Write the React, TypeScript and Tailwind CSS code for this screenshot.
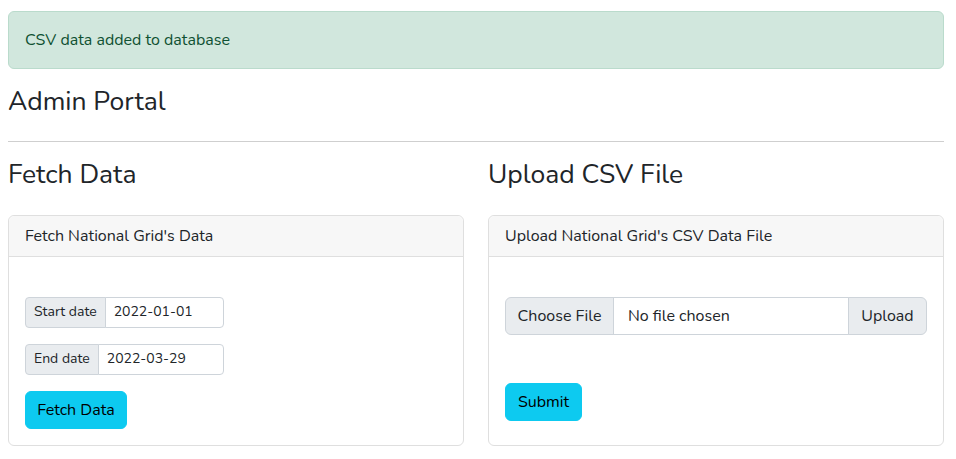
export default function App() {
  return (
    <div className="min-h-screen bg-white pl-2 pr-3 pt-[11px] text-[#212529] font-['Nunito','Lato',sans-serif]">
      <div className="rounded-md border border-[#badbcc] bg-[#d1e7dd] px-4 py-4 text-base leading-6 text-[#0f5132]">
        CSV data added to database
      </div>

      <h3 className="mt-[17px] text-[26.5px] leading-[1.2] font-normal">Admin Portal</h3>
      <hr className="mt-[23px] mb-4 border-t border-[#cfcfcf]" />

      <div className="grid grid-cols-2 gap-6">
        <div className="flex flex-col">
          <h3 className="pt-px text-[26.5px] leading-[1.2] font-normal">Fetch Data</h3>
          <div className="mt-6 flex flex-1 flex-col rounded-md border border-[#dfdfdf]">
            <div className="rounded-t-md border-b border-[#dfdfdf] bg-[#f7f7f7] px-4 py-2 text-base leading-6">
              Fetch National Grid's Data
            </div>
            <div className="flex flex-col px-4 pt-[40px] pb-4">
              <div className="mb-4 flex h-[31px] w-[199px] text-sm">
                <span className="flex items-center rounded-l border border-[#ced4da] bg-[#e9ecef] px-2">Start date</span>
                <input
                  readOnly
                  value="2022-01-01"
                  className="-ml-px min-w-0 flex-1 rounded-r border border-[#ced4da] bg-white px-2 text-sm outline-none"
                />
              </div>
              <div className="mb-4 flex h-[31px] w-[199px] text-sm">
                <span className="flex items-center rounded-l border border-[#ced4da] bg-[#e9ecef] px-2">End date</span>
                <input
                  readOnly
                  value="2022-03-29"
                  className="-ml-px min-w-0 flex-1 rounded-r border border-[#ced4da] bg-white px-2 text-sm outline-none"
                />
              </div>
              <button className="h-[38px] w-[102px] rounded-md border border-[#0dcaf0] bg-[#0dcaf0] text-base text-black">
                Fetch Data
              </button>
            </div>
          </div>
        </div>

        <div className="flex flex-col">
          <h3 className="pt-px text-[26.5px] leading-[1.2] font-normal">Upload CSV File</h3>
          <div className="mt-6 flex flex-1 flex-col rounded-md border border-[#dfdfdf]">
            <div className="rounded-t-md border-b border-[#dfdfdf] bg-[#f7f7f7] px-4 py-2 text-base leading-6">
              Upload National Grid's CSV Data File
            </div>
            <div className="flex flex-col px-4 pt-[40px] pb-4">
              <div className="flex h-[38px] text-base">
                <span className="flex w-[109px] items-center justify-center rounded-l-md border border-[#ced4da] bg-[#e9ecef]">
                  Choose File
                </span>
                <span className="-ml-px flex flex-1 items-center border border-[#ced4da] bg-white px-[14px]">
                  No file chosen
                </span>
                <button className="-ml-px w-[79px] rounded-r-md border border-[#ced4da] bg-[#e9ecef] text-base">
                  Upload
                </button>
              </div>
              <button className="mt-[48px] h-[38px] w-[77px] rounded-md border border-[#0dcaf0] bg-[#0dcaf0] text-base text-black">
                Submit
              </button>
            </div>
          </div>
        </div>
      </div>
    </div>
  );
}
